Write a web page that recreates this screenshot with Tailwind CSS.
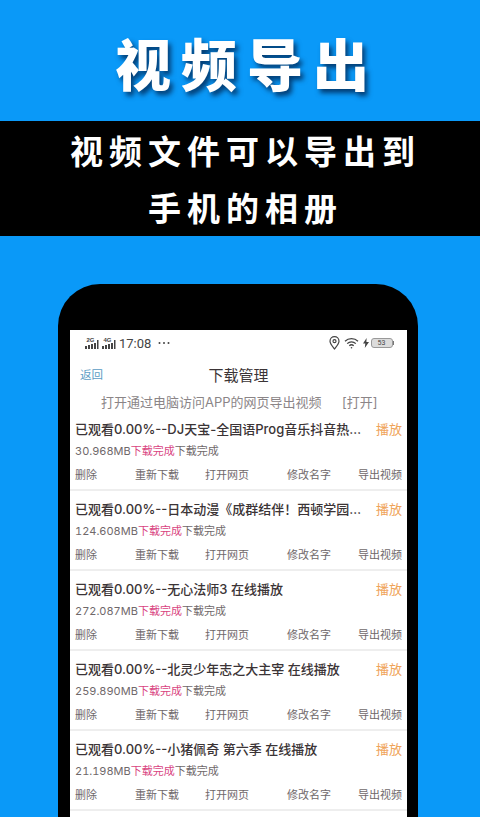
<!DOCTYPE html>
<html lang="zh">
<head>
<meta charset="UTF-8">
<title>视频导出</title>
<script src="https://cdn.jsdelivr.net/npm/@tailwindcss/browser@4"></script>
</head>
<body class="m-0">
<div class="w-[480px] h-[817px] overflow-hidden bg-[#0a99f8] font-['Noto_Sans_CJK_SC','Noto_Sans',sans-serif]">
  <!-- banner -->
  <div class="h-[121px] flex items-center justify-center pt-[2px]">
    <h1 class="text-[56px] leading-none font-black text-white tracking-[10px] pl-[14px] [text-shadow:3px_4px_5px_rgba(0,30,70,0.75)]">视频导出</h1>
  </div>
  <div class="h-[115px] bg-black text-white font-bold text-center text-[33px] tracking-[6px] pl-[11px]">
    <p class="h-[56px] leading-[58px]">视频文件可以导出到</p>
    <p class="h-[59px] leading-[60px]">手机的相册</p>
  </div>

  <!-- phone -->
  <div class="ml-[58px] mt-[48px] w-[360px] h-[540px] bg-black rounded-t-[42px] pt-[46px] px-[12px]">
    <div class="w-[337px] h-[494px] bg-white overflow-hidden text-[#3b3436] font-['Inter','Noto_Sans_CJK_SC',sans-serif]">
      <!-- status bar -->
      <div class="h-[26px] flex items-center justify-between pl-[15px] pr-[13px]">
        <div class="flex items-center gap-[3px] text-[#444]">
          <svg width="14" height="13" viewBox="0 0 14 13" fill="#444"><text x="1.5" y="5" font-size="6" font-family="Liberation Sans" font-weight="bold">2G</text><rect x="0" y="9" width="2" height="3"/><rect x="3" y="8" width="2" height="4"/><rect x="6" y="7" width="2" height="5"/><rect x="9" y="6" width="2" height="6"/><rect x="12" y="3" width="1.5" height="9"/></svg>
          <svg width="14" height="13" viewBox="0 0 14 13" fill="#444"><text x="1.5" y="5" font-size="6" font-family="Liberation Sans" font-weight="bold">4G</text><rect x="0" y="9" width="2" height="3"/><rect x="3" y="8" width="2" height="4"/><rect x="6" y="7" width="2" height="5"/><rect x="9" y="6" width="2" height="6"/><rect x="12" y="3" width="1.5" height="9"/></svg>
          <span class="text-[13px] leading-none font-['Roboto',sans-serif]">17:08</span>
          <svg class="ml-[4px]" width="12" height="4" viewBox="0 0 12 4" fill="#444"><circle cx="1.5" cy="2" r="1"/><circle cx="6" cy="2" r="1"/><circle cx="10.5" cy="2" r="1"/></svg>
        </div>
        <div class="flex items-center gap-[4px]">
          <svg width="11" height="14" viewBox="0 0 11 14" fill="none" stroke="#444" stroke-width="1.2"><path d="M5.5 13C3 9.8 1 7.6 1 5.2a4.5 4.5 0 0 1 9 0C10 7.6 8 9.8 5.5 13z"/><circle cx="5.5" cy="5.2" r="1.5"/></svg>
          <svg width="15" height="12" viewBox="0 0 15 12" fill="none" stroke="#444" stroke-width="1.3"><path d="M1 4.2a9.4 9.4 0 0 1 13 0"/><path d="M3.2 6.6a6.2 6.2 0 0 1 8.6 0"/><path d="M5.3 8.8a3.2 3.2 0 0 1 4.4 0"/><circle cx="7.5" cy="10.8" r="0.8" fill="#444" stroke="none"/></svg>
          <svg width="6" height="10" viewBox="0 0 6 10" fill="#444"><path d="M3.6 0L0 5.6h2.3L1.8 10 6 4.1H3.4z"/></svg>
          <div class="flex items-center -ml-[2px]">
            <div class="w-[22px] h-[10px] rounded-[3px] border border-[#999] bg-[#dcdcdc] flex items-center justify-center text-[7px] leading-none text-[#444] font-['Roboto',sans-serif]">53</div>
            <div class="w-[1.5px] h-[4px] bg-[#777]"></div>
          </div>
        </div>
      </div>
      <!-- nav -->
      <div class="relative h-[33px] flex items-center justify-center pt-[8px]">
        <span class="absolute left-[10px] top-[10px] text-[11.5px] leading-[18px] text-[#5b9cc4]">返回</span>
        <span class="text-[15px] text-[#3b3436]">下载管理</span>
      </div>
      <div class="h-[22px] flex items-center text-[13px] text-[#8b8587] pl-[31px] pt-[6px]">
        <span class="w-[241px] whitespace-nowrap">打开通过电脑访问APP的网页导出视频</span>
        <span class="whitespace-nowrap">[打开]</span>
      </div>

      <!-- list -->
      <div class="h-[80px] border-b-2 border-[#eeeeee] pl-[5px] pr-[5px] pt-[8px]">
        <div class="flex justify-between items-center h-[22px]">
          <span class="whitespace-nowrap text-[13px] font-medium">已观看0.00%--DJ天宝-全国语Prog音乐抖音热…</span>
          <span class="text-[13px] text-[#efa45a]">播放</span>
        </div>
        <p class="h-[20px] leading-[20px] text-[11px] text-[#6f686a] tabular-nums">30.968MB<span class="text-[#d9447f]">下载完成</span>下载完成</p>
        <div class="grid grid-cols-[60px_70px_82px_71px_1fr] h-[26px] items-center text-[11px] text-[#6f686a] pt-[3px]">
          <span>删除</span><span>重新下载</span><span>打开网页</span><span>修改名字</span><span class="text-right">导出视频</span>
        </div>
      </div>
      <div class="h-[80px] border-b-2 border-[#eeeeee] pl-[5px] pr-[5px] pt-[8px]">
        <div class="flex justify-between items-center h-[22px]">
          <span class="whitespace-nowrap text-[13px] font-medium">已观看0.00%--日本动漫《成群结伴！西顿学园…</span>
          <span class="text-[13px] text-[#efa45a]">播放</span>
        </div>
        <p class="h-[20px] leading-[20px] text-[11px] text-[#6f686a] tabular-nums">124.608MB<span class="text-[#d9447f]">下载完成</span>下载完成</p>
        <div class="grid grid-cols-[60px_70px_82px_71px_1fr] h-[26px] items-center text-[11px] text-[#6f686a] pt-[3px]">
          <span>删除</span><span>重新下载</span><span>打开网页</span><span>修改名字</span><span class="text-right">导出视频</span>
        </div>
      </div>
      <div class="h-[80px] border-b-2 border-[#eeeeee] pl-[5px] pr-[5px] pt-[8px]">
        <div class="flex justify-between items-center h-[22px]">
          <span class="whitespace-nowrap text-[13px] font-medium">已观看0.00%--无心法师3 在线播放</span>
          <span class="text-[13px] text-[#efa45a]">播放</span>
        </div>
        <p class="h-[20px] leading-[20px] text-[11px] text-[#6f686a] tabular-nums">272.087MB<span class="text-[#d9447f]">下载完成</span>下载完成</p>
        <div class="grid grid-cols-[60px_70px_82px_71px_1fr] h-[26px] items-center text-[11px] text-[#6f686a] pt-[3px]">
          <span>删除</span><span>重新下载</span><span>打开网页</span><span>修改名字</span><span class="text-right">导出视频</span>
        </div>
      </div>
      <div class="h-[80px] border-b-2 border-[#eeeeee] pl-[5px] pr-[5px] pt-[8px]">
        <div class="flex justify-between items-center h-[22px]">
          <span class="whitespace-nowrap text-[13px] font-medium">已观看0.00%--北灵少年志之大主宰 在线播放</span>
          <span class="text-[13px] text-[#efa45a]">播放</span>
        </div>
        <p class="h-[20px] leading-[20px] text-[11px] text-[#6f686a] tabular-nums">259.890MB<span class="text-[#d9447f]">下载完成</span>下载完成</p>
        <div class="grid grid-cols-[60px_70px_82px_71px_1fr] h-[26px] items-center text-[11px] text-[#6f686a] pt-[3px]">
          <span>删除</span><span>重新下载</span><span>打开网页</span><span>修改名字</span><span class="text-right">导出视频</span>
        </div>
      </div>
      <div class="h-[80px] border-b-2 border-[#eeeeee] pl-[5px] pr-[5px] pt-[8px]">
        <div class="flex justify-between items-center h-[22px]">
          <span class="whitespace-nowrap text-[13px] font-medium">已观看0.00%--小猪佩奇 第六季 在线播放</span>
          <span class="text-[13px] text-[#efa45a]">播放</span>
        </div>
        <p class="h-[20px] leading-[20px] text-[11px] text-[#6f686a] tabular-nums">21.198MB<span class="text-[#d9447f]">下载完成</span>下载完成</p>
        <div class="grid grid-cols-[60px_70px_82px_71px_1fr] h-[26px] items-center text-[11px] text-[#6f686a] pt-[3px]">
          <span>删除</span><span>重新下载</span><span>打开网页</span><span>修改名字</span><span class="text-right">导出视频</span>
        </div>
      </div>
    </div>
  </div>
</div>
</body>
</html>
